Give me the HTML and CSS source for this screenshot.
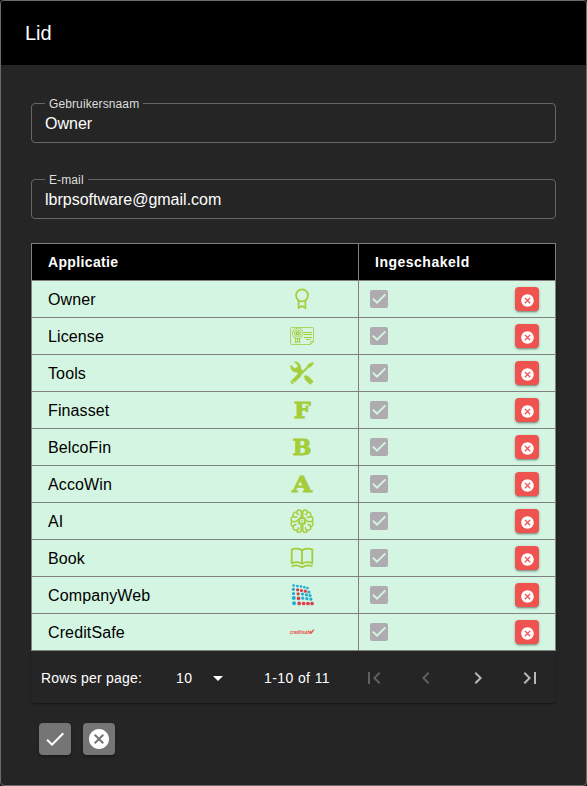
FILE: index.html
```html
<!DOCTYPE html>
<html lang="nl">
<head>
<meta charset="utf-8">
<title>Lid</title>
<link rel="stylesheet" href="styles.css">
</head>
<body>
<svg class="defs" aria-hidden="true">
  <symbol id="check" viewBox="0 0 24 24"><rect x="3" y="3" width="18" height="18" rx="2" fill="#aeabb1"/><path d="M5.8 11.600 10 15.600 18.400 7.400" fill="none" stroke="#d4f5e2" stroke-width="2"/></symbol>
  <symbol id="cancel" viewBox="0 0 24 24"><path fill="currentColor" d="M12 2C6.47 2 2 6.47 2 12s4.47 10 10 10 10-4.47 10-10S17.53 2 12 2zm5 13.59L15.59 17 12 13.41 8.41 17 7 15.59 10.59 12 7 8.41 8.41 7 12 10.59 15.59 7 17 8.41 13.41 12 17 15.59z"/></symbol>
</svg>
<main class="dialog">
  <header class="title">Lid</header>
  <div class="content">
    <fieldset class="field"><legend>Gebruikersnaam</legend><div class="value">Owner</div></fieldset>
    <fieldset class="field"><legend>E-mail</legend><div class="value">lbrpsoftware@gmail.com</div></fieldset>
    <section class="paper">
      <div class="table">
        <div class="row head"><div class="cell">Applicatie</div><div class="cell enabled">Ingeschakeld</div></div>
        <div class="row"><div class="cell">Owner
          <svg class="app" viewBox="0 0 24 24"><g fill="none" stroke="#a4cd39" stroke-width="1.7"><circle cx="12" cy="8.3" r="6"/><path d="M8.6 13.4v7.600l3.400-2 3.400 2v-7.600"/></g></svg></div>
          <div class="cell enabled"><svg class="box"><use href="#check"/></svg><button class="remove"><svg><use href="#cancel"/></svg></button></div></div>
        <div class="row"><div class="cell">License
          <svg class="app" viewBox="0 0 24 24"><g fill="none" stroke="#a4cd39" stroke-width=".8"><path d="M20.5 20.5H1.5Q.5 20.5.5 19.5V4.5q0-1 1-1h21q1 0 1 1V17.5l-3 3V17.5h3"/><circle cx="7.7" cy="9.3" r="5.2" stroke-width="1.1" stroke-dasharray="1.5 .5"/><circle cx="7.7" cy="9.3" r="3.3"/><circle cx="7.7" cy="9.3" r="1.4" stroke-width="1.5"/><path d="M5.7 14v5l2-1.500 2 1.500v-5M7.700 14v4M14 8.500h8M14 10.500h8M14 13.500h8M16.300 15.500h4" stroke-width="1"/></g></svg></div>
          <div class="cell enabled"><svg class="box"><use href="#check"/></svg><button class="remove"><svg><use href="#cancel"/></svg></button></div></div>
        <div class="row"><div class="cell">Tools
          <svg class="app" viewBox="0 0 24 24"><g fill="#a4cd39" stroke="#a4cd39" stroke-width=".5" stroke-linejoin="round"><path d="M4.300.700 7.800 4.200 7.100 6.700 4.500 7.400.900 4.100C-.200 7.700 2.600 11.400 6.500 11l2.500 2.400 3.900-3.700-2.300-2.300C11.200 3.700 8 .100 4.300.700zM15.800 14.100l1.700 1.700.7-.500 5.100 5.100-3.200 3.200-5.200-5.200.4-.900-1.500-1.500z"/><path d="M22.600 1.200 18 3.500 17.300 5.600 10.600 12.200 7.900 13 .900 20.400Q.400 22.300 2.400 23.100L10 16.300 11.800 13.300 18.800 6.400 20.800 5.700 23.700 2.300z"/></g><circle cx="3" cy="21" r=".8" fill="#d4f5e2"/></svg></div>
          <div class="cell enabled"><svg class="box"><use href="#check"/></svg><button class="remove"><svg><use href="#cancel"/></svg></button></div></div>
        <div class="row"><div class="cell">Finasset
          <svg class="app letter" viewBox="0 0 24 24"><text x="3.700" y="20.400" textLength="17" lengthAdjust="spacingAndGlyphs">F</text></svg></div>
          <div class="cell enabled"><svg class="box"><use href="#check"/></svg><button class="remove"><svg><use href="#cancel"/></svg></button></div></div>
        <div class="row"><div class="cell">BelcoFin
          <svg class="app letter" viewBox="0 0 24 24"><text x="2.500" y="20.400" textLength="19" lengthAdjust="spacingAndGlyphs">B</text></svg></div>
          <div class="cell enabled"><svg class="box"><use href="#check"/></svg><button class="remove"><svg><use href="#cancel"/></svg></button></div></div>
        <div class="row"><div class="cell">AccoWin
          <svg class="app letter" viewBox="0 0 24 24"><text x="2" y="20.400" textLength="20" lengthAdjust="spacingAndGlyphs">A</text></svg></div>
          <div class="cell enabled"><svg class="box"><use href="#check"/></svg><button class="remove"><svg><use href="#cancel"/></svg></button></div></div>
        <div class="row"><div class="cell">AI
          <svg class="app" viewBox="0 0 24 24"><g id="lobe" fill="none" stroke="#a4cd39" stroke-width="1.450" stroke-linecap="round"><path d="M11.200 8.500V3.200C11.200.2 7 .2 6.700 3.200 4 2.700 2.300 5 3.400 7.300.8 8 .200 11.200 2.100 12.500.200 14.200.900 17.200 3.400 17.700 2.600 20 4.400 21.700 6.500 21.200 7 24.300 11.200 24 11.200 21v-5M6.700 3.200q0 1.800 1.800 2.300M3.400 7.300Q4.800 9 6.700 7.800M2.100 12.500H6q1.400 0 1.400-1.500M3.400 17.700q.3-2.200 2.600-2.200M6.500 21.200Q8.800 21 8.600 18.800"/></g><use href="#lobe" transform="matrix(-1 0 0 1 24 0)"/><rect x="9.300" y="9.300" width="5.400" height="5.400" fill="#d4f5e2" stroke="#a4cd39" stroke-width="1.700"/><path d="M12 11v2.500M8 11h1M8 13.500h1M15 11h1M15 13.500h1" stroke="#a4cd39"/></svg></div>
          <div class="cell enabled"><svg class="box"><use href="#check"/></svg><button class="remove"><svg><use href="#cancel"/></svg></button></div></div>
        <div class="row"><div class="cell">Book
          <svg class="app" viewBox="0 0 24 24"><g fill="none" stroke="#a4cd39" stroke-width="1.800" stroke-linejoin="round"><path d="M12 4.500C9.500 2.200 4.500 2.200 1.700 3.600V17.300C5 15.800 9 15.800 12 17.700 15 15.800 19 15.800 22.300 17.300V3.600C19.500 2.200 14.500 2.200 12 4.500zM12 4.500v13M1.500 20.300Q6.500 18.300 10 20.500 12 21.800 14 20.500 17.500 18.300 22.500 20.300"/></g></svg></div>
          <div class="cell enabled"><svg class="box"><use href="#check"/></svg><button class="remove"><svg><use href="#cancel"/></svg></button></div></div>
        <div class="row"><div class="cell">CompanyWeb
          <svg class="app" viewBox="0 0 24 24"><g fill="none" stroke-linecap="round"><path stroke="#25aed4" stroke-width="2.500" d="M3.500 2.500h.3M7.200 2.900h.3M10.800 3.600h.3M14.200 4.200h.3M17.300 5.100h.3"/><path stroke="#25aed4" stroke-width="3.200" d="M3.300 6.400h.1M3.500 10.600h.1M18.900 9h.1M12.400 11.100h.1M16.400 11.800h.1M20 12.500h.1M12.700 15.200h.1M16.800 15.700h.1M20.800 16.200h.1"/><path stroke="#25aed4" stroke-width="4" d="M3.700 15h.1M4 20.300h.1"/><path stroke="#de3d4c" stroke-width="3.200" d="M7.600 6.800h.1M11.400 7.500h.1M15.300 8.200h.1M8.100 10.800h.1"/><path stroke="#de3d4c" stroke-width="3.700" d="M8.500 15.300h.1M9.100 20.400h.1M13.600 20.500h.1M17.900 20.500h.1M22 20.500h.1"/></g></svg></div>
          <div class="cell enabled"><svg class="box"><use href="#check"/></svg><button class="remove"><svg><use href="#cancel"/></svg></button></div></div>
        <div class="row"><div class="cell">CreditSafe
          <svg class="app brand" viewBox="0 0 24 24"><text x="0" y="13.600" textLength="21.500" lengthAdjust="spacingAndGlyphs">creditsafe</text><path d="m20.500 11.500 1 1.200 2.300-3" fill="none" stroke="#e74a43" stroke-width="1.200"/></svg></div>
          <div class="cell enabled"><svg class="box"><use href="#check"/></svg><button class="remove"><svg><use href="#cancel"/></svg></button></div></div>
      </div>
      <footer class="pager">
        <span class="label">Rows per page:</span><span class="size">10</span>
        <svg class="arrow" viewBox="0 0 24 24"><path d="m7 10 5 5 5-5z"/></svg>
        <span class="range">1-10 of 11</span>
        <nav class="pages">
          <svg class="off" viewBox="0 0 24 24"><path d="M18.410 16.590 13.820 12l4.590-4.590L17 6l-6 6 6 6zM6 6h2v12H6z"/></svg>
          <svg class="off" viewBox="0 0 24 24"><path d="M15.410 7.410 14 6l-6 6 6 6 1.410-1.410L10.830 12z"/></svg>
          <svg viewBox="0 0 24 24"><path d="M10 6 8.590 7.410 13.170 12l-4.580 4.590L10 18l6-6z"/></svg>
          <svg viewBox="0 0 24 24"><path d="M5.590 7.410 10.180 12l-4.590 4.590L7 18l6-6-6-6zM16 6h2v12h-2z"/></svg>
        </nav>
      </footer>
    </section>
    <div class="actions">
      <button><svg viewBox="0 0 24 24"><path fill="currentColor" d="M9 16.170 4.830 12l-1.420 1.410L9 19 21 7l-1.410-1.410z"/></svg></button>
      <button><svg><use href="#cancel"/></svg></button>
    </div>
  </div>
</main>
</body>
</html>
```
FILE: styles.css
```css
* { box-sizing: border-box; }
body { margin: 0; background: #171717; color: #fff; font: 16px/24px "Liberation Sans", Arial, sans-serif; }
svg { display: block; flex: none; }
button { border: 0; padding: 0; color: #fff; display: flex; align-items: center; justify-content: center; border-radius: 4px; }
.defs { width: 0; height: 0; position: absolute; }
.dialog { height: 786px; border: 1px solid #6b6b6b; border-radius: 4px; background: #252525; overflow: hidden; }
.title { height: 64px; padding: 0 24px; background: #000; font-size: 20px; line-height: 64px; }
.content { padding: 32px 30px 0; }
.field { height: 46px; margin: 0 0 30px; padding: 0 13px; border: 1px solid #666; border-radius: 4px; min-width: 0; }
.field legend { height: 13px; margin-left: 0; padding: 0 4px; font-size: 12px; line-height: 15px; letter-spacing: .11px; color: #dedede; }
.value { line-height: 23px; margin-top: 2px; }
.paper { margin-top: -6px; height: 460px; border-radius: 0 0 4px 4px; box-shadow: 0 2px 1px -1px rgba(0,0,0,.2), 0 1px 1px rgba(0,0,0,.14), 0 1px 3px rgba(0,0,0,.12); }
.table { border: 1px solid #808080; border-bottom: 0; }
.row { display: grid; grid-template-columns: 327px 1fr; height: 37px; border-bottom: 1px solid #808080; background: #d4f5e2; color: #000; }
.cell { display: flex; align-items: center; justify-content: space-between; padding: 2px 44px 0 16px; border-right: 1px solid #808080; letter-spacing: .12px; }
.cell.enabled { border: 0; padding: 0 16px 0 8px; }
.head { background: #000; color: #fff; font-weight: bold; font-size: 14px; }
.head .cell { padding-top: 0; letter-spacing: .35px; }
.head .cell.enabled { padding-left: 16px; letter-spacing: .5px; }
.app, .box { width: 24px; height: 24px; }
.app { margin-bottom: 2px; overflow: visible; letter-spacing: 0; }
.letter text { font: bold 23px "DejaVu Serif", serif; fill: #a4cd39; stroke: #a4cd39; stroke-width: .9; }
.brand text { font: italic bold 5px "Liberation Sans", sans-serif; fill: #e74a43; }
.remove { width: 24px; height: 24px; background: #ef5350; box-shadow: 0 2px 2px -1px rgba(0,0,0,.3), 0 1px 3px rgba(0,0,0,.25); }
.remove svg { width: 15px; height: 15px; margin: 3px 0 0 1px; }
.pager { display: flex; align-items: center; height: 52px; padding: 2px 0 0 10px; font-size: 14px; letter-spacing: .4px; }
.label { width: 135px; letter-spacing: .22px; }
.size { width: 30px; }
.arrow { width: 24px; height: 24px; fill: #fff; }
.range { width: 98px; margin-left: 34px; }
.pages { display: flex; gap: 28px; }
.pages svg { width: 24px; height: 24px; fill: #b8b8b8; }
.pages .off { fill: #606060; }
.actions { display: flex; gap: 12px; padding: 20px 8px; }
.actions button { width: 32px; height: 32px; background: #757575; box-shadow: 0 2px 3px rgba(0,0,0,.3); }
.actions svg { width: 24px; height: 24px; }
```
